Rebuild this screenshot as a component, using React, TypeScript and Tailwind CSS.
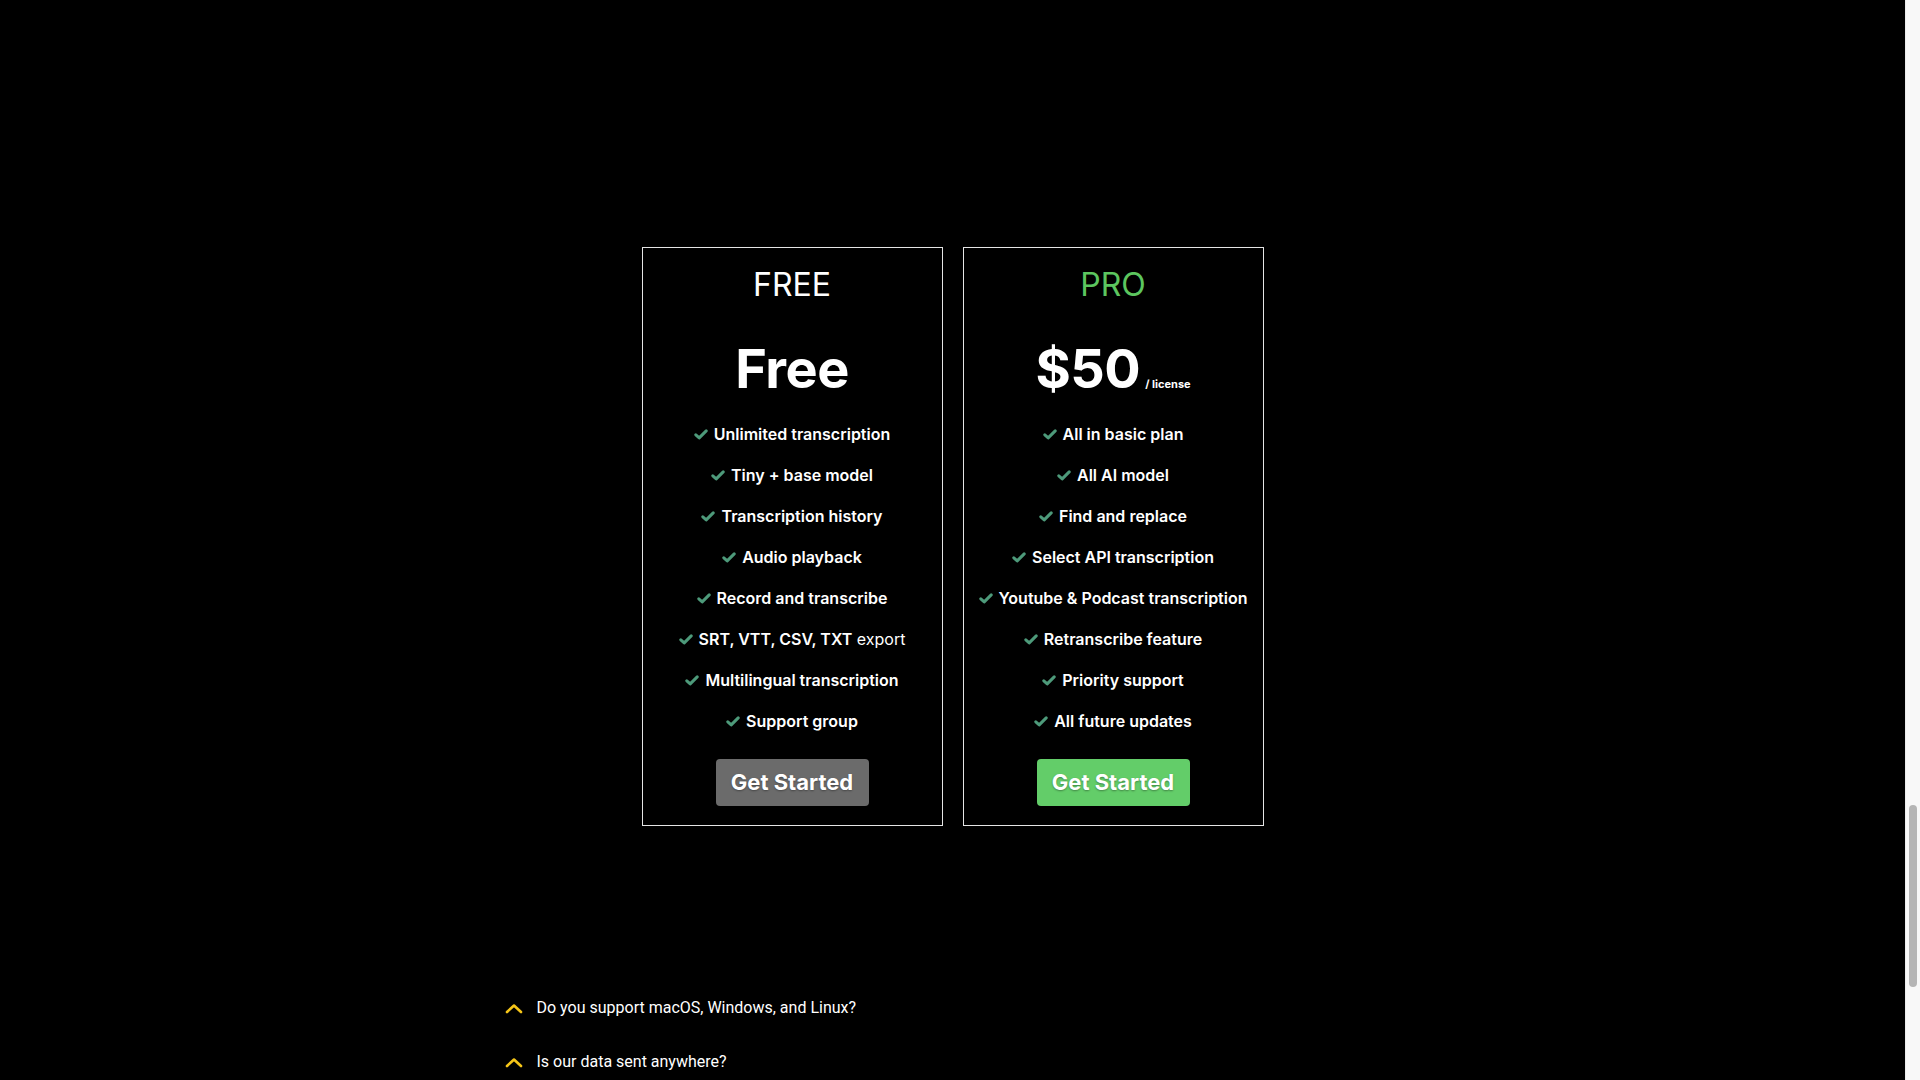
type Feature = { bold: string; light?: string };

const plans: {
  name: string;
  nameClass: string;
  price: string;
  unit?: string;
  features: Feature[];
  buttonClass: string;
}[] = [
  {
    name: "FREE",
    nameClass: "text-white",
    price: "Free",
    features: [
      { bold: "Unlimited transcription" },
      { bold: "Tiny + base model" },
      { bold: "Transcription history" },
      { bold: "Audio playback" },
      { bold: "Record and transcribe" },
      { bold: "SRT, VTT, CSV, TXT", light: "export" },
      { bold: "Multilingual transcription" },
      { bold: "Support group" },
    ],
    buttonClass: "bg-[#6b6b6b]",
  },
  {
    name: "PRO",
    nameClass: "text-[#5cc65f]",
    price: "$50",
    unit: "/ license",
    features: [
      { bold: "All in basic plan" },
      { bold: "All AI model" },
      { bold: "Find and replace" },
      { bold: "Select API transcription" },
      { bold: "Youtube & Podcast transcription" },
      { bold: "Retranscribe feature" },
      { bold: "Priority support" },
      { bold: "All future updates" },
    ],
    buttonClass: "bg-[#63cd69]",
  },
];

const faqs = [
  "Do you support macOS, Windows, and Linux?",
  "Is our data sent anywhere?",
];

function Check() {
  return (
    <svg viewBox="0 0 14 11" className="w-[14px] h-[11px] shrink-0" fill="none">
      <path
        d="M1.8 5.8 L5.2 8.9 L12.2 1.9"
        stroke="#4d9a7a"
        strokeWidth="3"
        strokeLinecap="round"
        strokeLinejoin="round"
      />
    </svg>
  );
}

function Chevron() {
  return (
    <svg viewBox="0 0 18 11" className="w-[18px] h-[11px] shrink-0" fill="none">
      <path
        d="M2 9 L9 2.5 L16 9"
        stroke="#f5c518"
        strokeWidth="2.6"
        strokeLinecap="round"
        strokeLinejoin="round"
      />
    </svg>
  );
}

export default function App() {
  return (
    <div className="flex h-screen w-full bg-black overflow-hidden font-['Inter',sans-serif]">
      <main className="flex-1 min-w-0">
        {/* Pricing */}
        <section className="pt-[247px] flex justify-center gap-[20px]">
          {plans.map((plan) => (
            <div
              key={plan.name}
              className="w-[301px] h-[579px] border border-[#e5e5e5] flex flex-col items-center pt-[17px]"
            >
              <h3 className={`text-[32px] leading-[40px] font-normal ${plan.nameClass}`}>
                {plan.name}
              </h3>
              <div className="mt-[37px] flex items-baseline text-white">
                <span className="text-[54px] leading-[54px] font-bold tracking-[-0.5px]">
                  {plan.price}
                </span>
                {plan.unit && (
                  <span className="ml-[5px] text-[11px] font-bold">{plan.unit}</span>
                )}
              </div>
              <ul className="mt-[26px] flex flex-col items-center gap-[17px]">
                {plan.features.map((f) => (
                  <li
                    key={f.bold}
                    className="flex items-center gap-[6px] h-[24px] text-white text-[16px] font-semibold whitespace-nowrap"
                  >
                    <Check />
                    <span>
                      {f.bold}
                      {f.light && <span className="font-normal"> {f.light}</span>}
                    </span>
                  </li>
                ))}
              </ul>
              <button
                className={`mt-[26px] w-[153px] h-[47px] rounded-[4px] text-white text-[22px] font-bold [text-shadow:0_1px_2px_rgba(0,0,0,0.35)] ${plan.buttonClass}`}
              >
                Get Started
              </button>
            </div>
          ))}
        </section>

        {/* FAQ */}
        <section className="mt-[155px] max-w-[896px] mx-auto font-['Roboto',sans-serif]">
          {faqs.map((q) => (
            <div key={q} className="flex items-center h-[54px] text-white text-[16px]">
              <Chevron />
              <span className="ml-[14px]">{q}</span>
            </div>
          ))}
        </section>
      </main>

      {/* scrollbar */}
      <div className="w-[15px] shrink-0 bg-[#f8f8f8] border-l border-[#ececec] flex flex-col">
        <div className="h-[805px]" />
        <div className="mx-auto w-[8px] h-[182px] rounded-full bg-[#b5b5b5]" />
      </div>
    </div>
  );
}
